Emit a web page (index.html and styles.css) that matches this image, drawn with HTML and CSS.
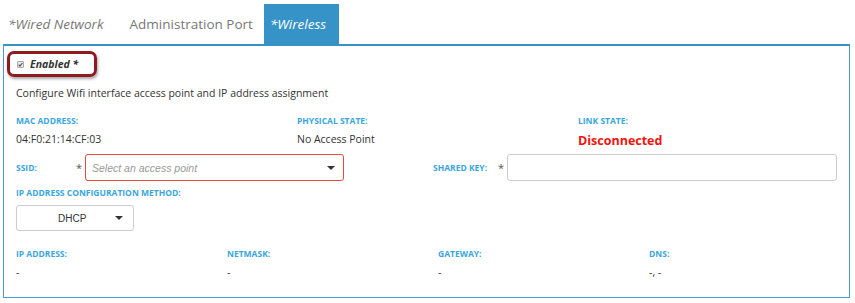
FILE: index.html
```html
<!DOCTYPE html>
<html lang="en">
<head>
  <meta charset="UTF-8">
  <title>Network Settings</title>
  <link rel="stylesheet" href="styles.css">
</head>
<body>

<div class="tabs">
  <div class="tab">*Wired Network</div>
  <div class="tab plain">Administration Port</div>
  <div class="tab active">*Wireless</div>
</div>

<div class="panel">
  <div class="enabled-box">
    <label class="enabled">
      <span class="check">
        <svg width="5" height="5" viewBox="0 0 6 6"><path d="M0.8 3.2 L2.4 4.8 L5.2 1.2" fill="none" stroke="#555" stroke-width="1.4"/></svg>
      </span>
      Enabled *
    </label>
  </div>

  <p class="intro">Configure Wifi interface access point and IP address assignment</p>

  <div class="row three">
    <div class="field">
      <div class="label">MAC Address:</div>
      <div class="value">04:F0:21:14:CF:03</div>
    </div>
    <div class="field">
      <div class="label">Physical State:</div>
      <div class="value">No Access Point</div>
    </div>
    <div class="field">
      <div class="label">Link State:</div>
      <div class="value status">Disconnected</div>
    </div>
  </div>

  <div class="row inputs">
    <div class="input-group ssid">
      <span class="label">SSID:</span>
      <span class="req">*</span>
      <div class="select error">
        <span class="placeholder">Select an access point</span>
        <span class="caret"></span>
      </div>
    </div>
    <div class="input-group key">
      <span class="label">Shared Key:</span>
      <span class="req">*</span>
      <div class="text-input"></div>
    </div>
  </div>

  <div class="label method-label">IP Address Configuration Method:</div>
  <div class="select small">
    <span class="select-text">DHCP</span>
    <span class="caret"></span>
  </div>

  <div class="row four">
    <div class="field">
      <div class="label">IP Address:</div>
      <div class="value dash">-</div>
    </div>
    <div class="field">
      <div class="label">Netmask:</div>
      <div class="value dash">-</div>
    </div>
    <div class="field">
      <div class="label">Gateway:</div>
      <div class="value dash">-</div>
    </div>
    <div class="field">
      <div class="label">DNS:</div>
      <div class="value dash">-, -</div>
    </div>
  </div>
</div>

</body>
</html>
```

FILE: styles.css
```css
body {
  margin: 0;
  font-family: "Open Sans", Arial, sans-serif;
  color: #333;
  background: #fff;
}
.tabs {
  display: flex;
  margin: 4px 0 0 -3px;
  height: 40px;
}
.tab {
  padding: 0 11px;
  font-size: 13.5px;
  font-style: italic;
  line-height: 40px;
  color: #777;
}
.tab.plain {
  font-style: normal;
  margin-left: 4px;
}
.tab.active {
  background: #3593c8;
  color: #fff;
  padding: 0 13px 0 6px;
}
.panel {
  margin: 0 5px 0 3px;
  border: 1px solid #4a9bd0;
  border-top: 2px solid #3593c8;
  height: 251px;
  padding: 0 12px;
}
.enabled-box {
  display: inline-block;
  margin: 5px 0 0 -9px;
  padding: 3px 16px 3px 7px;
  border: 3px solid #8e1b20;
  border-radius: 7px;
  box-shadow: 1px 2px 3px rgba(0,0,0,0.35);
}
.enabled {
  font-size: 10.5px;
  line-height: 14px;
  font-weight: bold;
  font-style: italic;
  color: #333;
  display: flex;
  align-items: center;
  gap: 6px;
}
.check {
  width: 7px;
  height: 7px;
  box-sizing: border-box;
  border: 1px solid #aaa;
  border-radius: 1px;
  background: #e8e8e8;
  display: flex;
  align-items: center;
  justify-content: center;
}
.intro {
  font-size: 10.5px;
  margin: 9px 0 0;
}
.row {
  display: flex;
}
.row .field {
  flex-shrink: 0;
}
.three .field {
  width: 281px;
}
.four .field {
  width: 211px;
}
.row .field:last-child {
  width: auto;
  flex: 1;
}
.three {
  margin-top: 15px;
}
.label {
  font-size: 8.5px;
  font-weight: bold;
  text-transform: uppercase;
  color: #3aa6e0;
}
.value {
  font-size: 10.5px;
  margin-top: 6px;
}
.value.status {
  color: #f0140f;
  font-weight: bold;
  font-size: 12.5px;
}
.inputs {
  margin-top: 5px;
}
.input-group {
  display: flex;
  align-items: center;
}
.ssid {
  width: 417px;
  flex-shrink: 0;
}
.ssid .label {
  width: 60px;
}
.key .label {
  width: 65px;
}
.req {
  font-size: 11px;
  color: #555;
  width: 9px;
}
.select {
  display: flex;
  align-items: center;
  justify-content: space-between;
  border: 1px solid #ccc;
  border-radius: 3px;
  height: 24px;
  box-sizing: border-box;
}
.select.error {
  border-color: #e74c3c;
  width: 259px;
  height: 27px;
  padding: 0 8px 0 6px;
}
.placeholder {
  font-family: "Liberation Sans", Arial, sans-serif;
  font-size: 10.5px;
  font-style: italic;
  color: #999;
}
.caret {
  width: 0;
  height: 0;
  border-left: 4px solid transparent;
  border-right: 4px solid transparent;
  border-top: 4px solid #333;
}
.text-input {
  width: 330px;
  height: 27px;
  box-sizing: border-box;
  border: 1px solid #ccc;
  border-radius: 3px;
}
.method-label {
  margin-top: 6px;
}
.select.small {
  width: 118px;
  height: 26px;
  margin-top: 7px;
  padding: 0 10px 0 41px;
}
.select-text {
  font-family: "Liberation Sans", Arial, sans-serif;
  font-size: 10px;
}
.four {
  margin-top: 17px;
}
.value.dash {
  margin-top: 6px;
}
```
